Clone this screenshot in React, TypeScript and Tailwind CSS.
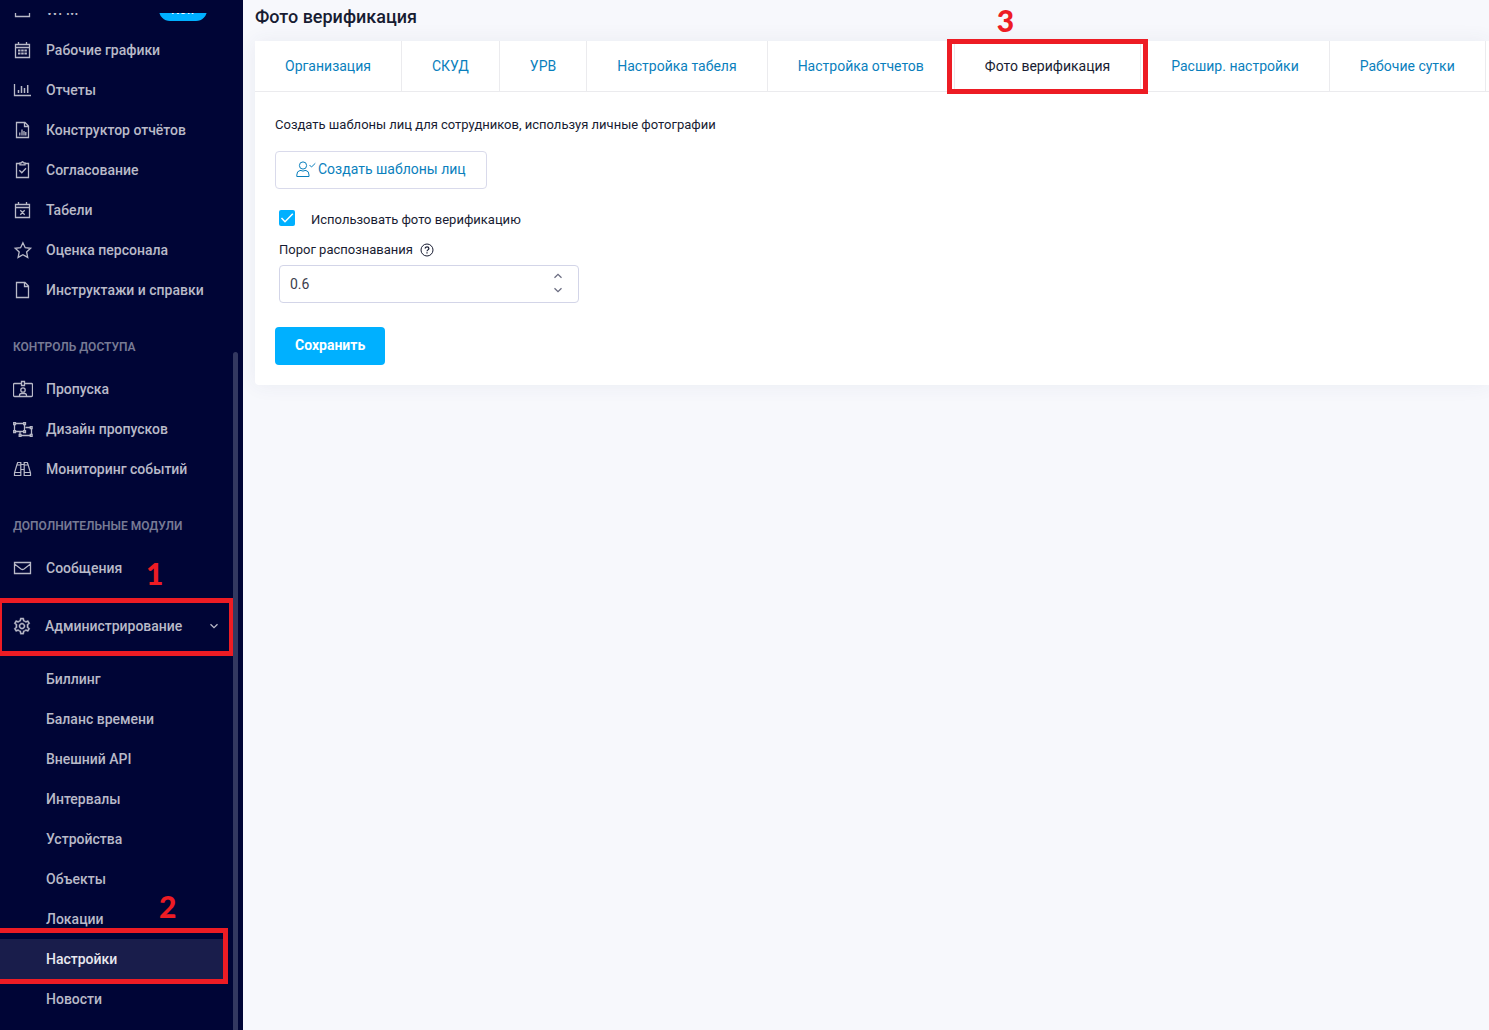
import type { ReactNode } from "react";
import { clsx } from "clsx";
import { LiaCogSolid } from "react-icons/lia";

interface NavItem {
  label: string;
  icon: ReactNode;
}

function LineIcon({ children }: { children: ReactNode }) {
  return (
    <svg
      width="20"
      height="20"
      viewBox="0 0 20 20"
      fill="none"
      stroke="currentColor"
      strokeWidth="1.3"
      className="shrink-0"
      aria-hidden="true"
    >
      {children}
    </svg>
  );
}

const WorkforceIcon = () => (
  <LineIcon>
    <path d="M2.5 3.5h14v13h-14z" />
  </LineIcon>
);

const ScheduleIcon = () => (
  <LineIcon>
    <path d="M2.5 4.5h14v13h-14zM2.5 7.5h14M5.500 2v2.500M13.500 2v2.500" />
    <path d="M5 10.500h9M5 13.500h9" strokeWidth="2" strokeDasharray="2.500 .7" />
  </LineIcon>
);

const ChartIcon = () => (
  <LineIcon>
    <path d="M1.500 4v11.500h16.500" />
    <path d="M5.500 10v3M8.500 6v7M11.500 8v5M14.700 5v8" strokeWidth="1.500" />
  </LineIcon>
);

const ReportFileIcon = () => (
  <LineIcon>
    <path d="M3.500 2.500h8.500l3.500 3.500v11.500h-12zM11.500 2.500v4h4" />
    <path d="M6.800 12.500V15.500M9 9.500v6M11 11v4.500M12.800 12v3.500" />
  </LineIcon>
);

const ClipboardIcon = () => (
  <LineIcon>
    <path d="M7 3.500H3.500v14h12v-14H12M7 2.800h1.500c.3-1.400 1.700-1.400 2 0H12v2H7zM6.300 10.300l2.500 2.500L13 8.300" />
  </LineIcon>
);

const TimesheetIcon = () => (
  <LineIcon>
    <path d="M2.500 4.500h14v13h-14zM2.500 7.500h14M5.500 2v2.500M13.500 2v2.500M7.300 10.300l4.400 4.400M11.700 10.300l-4.400 4.400" />
  </LineIcon>
);

const StarIcon = () => (
  <LineIcon>
    <path d="M9.900 2.700l2.300 5 5.400.6-4 3.700 1.100 5.400-4.800-2.700-4.800 2.700 1.100-5.400-4-3.700 5.400-.6z" />
  </LineIcon>
);

const FileIcon = () => (
  <LineIcon>
    <path d="M3.500 2.500h8.500l3.500 3.500v11.500h-12zM11.500 2.500v4h4" />
  </LineIcon>
);

const BadgeIcon = () => (
  <LineIcon>
    <path d="M8 4.500H1.500q-1 0-1 1v11q0 1 1 1h17q1 0 1-1v-11q0-1-1-1H12M8.500 2.500h3v4h-3zM6.500 17.500v-1a2 2 0 0 1 2-2h3a2 2 0 0 1 2 2v1" />
    <circle cx="10" cy="11" r="2.200" />
  </LineIcon>
);

const DesignIcon = () => (
  <LineIcon>
    <path d="M1.500 5.500v6M2.500 4.500h8M2.500 12.500h8M11.500 5.500v6M12.500 8.500h5M18.500 9.500v6M8 16.500h9.500M7 13v2.500" />
    <path d="M.7 3.700h1.800v1.800H.7zM10.700 3.700h1.800v1.800h-1.800zM.7 11.700h1.800v1.800H.7zM10.700 11.700h1.800v1.800h-1.800zM17.300 7.700h1.800v1.800h-1.800zM17.300 15.500h1.800v1.800h-1.800zM6.200 15.500H8v1.800H6.200z" />
  </LineIcon>
);

const BinocularsIcon = () => (
  <LineIcon>
    <path d="M4.700 3.500h3.100v13H1.500v-2.700L4 5.500zM14.300 3.500h-3.100v13h6.300v-2.700L15 5.500zM1.500 13.500h6.300M11.200 13.500h6.300M7.800 5.500h3.400M7.800 10.500h3.400M4 6h3.800M11.200 6H15" strokeWidth="1.200" />
  </LineIcon>
);

const EnvelopeIcon = () => (
  <LineIcon>
    <path d="M1.500 4.500h16v11h-16zM1.500 6l6.500 5q1.500 1 3 0l6.500-5" />
  </LineIcon>
);

function UserCheckIcon() {
  return (
    <svg width="20" height="20" viewBox="0 0 20 20" fill="none" stroke="currentColor" aria-hidden="true">
      <circle cx="7" cy="6.500" r="3.600" />
      <path d="M4 11.500h1l2 .6 2-.6h1q3 .5 3 4.500v1.500H.8V16q0-4 3.200-4.500zM13.500 6l2 2L19.300 4.300" />
    </svg>
  );
}

function QuestionIcon() {
  return (
    <svg width="14" height="14" viewBox="0 0 14 14" fill="none" stroke="currentColor" aria-hidden="true">
      <circle cx="7" cy="7" r="6" />
      <path d="M5.200 5.600c0-2.300 3.700-2.300 3.700 0 0 1.200-1.900 1.400-1.900 2.700M7 9.300v1.300" strokeWidth="1.200" />
    </svg>
  );
}

function Chevron({ up = false, className }: { up?: boolean; className?: string }) {
  return (
    <svg
      width="10"
      height="6"
      viewBox="0 0 10 6"
      fill="none"
      stroke="currentColor"
      strokeWidth="1.3"
      className={className}
      aria-hidden="true"
    >
      <path d={up ? "M1.500 4.700L5 1.300l3.500 3.400" : "M1.500 1.300L5 4.700l3.500-3.400"} />
    </svg>
  );
}

const mainItems: NavItem[] = [
  { label: "Рабочие графики", icon: <ScheduleIcon /> },
  { label: "Отчеты", icon: <ChartIcon /> },
  { label: "Конструктор отчётов", icon: <ReportFileIcon /> },
  { label: "Согласование", icon: <ClipboardIcon /> },
  { label: "Табели", icon: <TimesheetIcon /> },
  { label: "Оценка персонала", icon: <StarIcon /> },
  { label: "Инструктажи и справки", icon: <FileIcon /> },
];

const accessItems: NavItem[] = [
  { label: "Пропуска", icon: <BadgeIcon /> },
  { label: "Дизайн пропусков", icon: <DesignIcon /> },
  { label: "Мониторинг событий", icon: <BinocularsIcon /> },
];

const adminItems = [
  "Биллинг",
  "Баланс времени",
  "Внешний API",
  "Интервалы",
  "Устройства",
  "Объекты",
  "Локации",
  "Настройки",
  "Новости",
];

const tabs = [
  "Организация",
  "СКУД",
  "УРВ",
  "Настройка табеля",
  "Настройка отчетов",
  "Фото верификация",
  "Расшир. настройки",
  "Рабочие сутки",
];

function Mark({ children, className }: { children: ReactNode; className: string }) {
  return (
    <span className={clsx("absolute font-['Lato',sans-serif] text-[30px] leading-9 font-black text-[#ed1c24]", className)}>
      {children}
    </span>
  );
}

function NavLink({ label, icon }: NavItem) {
  return (
    <a href="#" className="flex h-10 items-center gap-[13px] pl-[13px]">
      {icon}
      {label}
    </a>
  );
}

function SectionTitle({ children }: { children: ReactNode }) {
  return <h2 className="flex h-[59px] items-center pt-[15px] pl-[13px] text-xs font-semibold text-[#777a94]">{children}</h2>;
}

function Sidebar() {
  return (
    <aside className="relative w-[243px] shrink-0 bg-[#000536] pt-[13px] font-medium text-[#b9bac8]">
      <nav className="h-full overflow-hidden">
        <a href="#" className="-mt-[23px] flex h-10 items-center gap-[13px] pl-[13px]">
          <WorkforceIcon />
          WFM
          <span className="mr-9 ml-auto flex h-[22px] w-12 items-center justify-center rounded-full bg-[#00b0ff] text-xs text-white">
            New
          </span>
        </a>
        {mainItems.map((item) => (
          <NavLink key={item.label} {...item} />
        ))}
        <SectionTitle>КОНТРОЛЬ ДОСТУПА</SectionTitle>
        {accessItems.map((item) => (
          <NavLink key={item.label} {...item} />
        ))}
        <SectionTitle>ДОПОЛНИТЕЛЬНЫЕ МОДУЛИ</SectionTitle>
        <div className="relative">
          <NavLink label="Сообщения" icon={<EnvelopeIcon />} />
          <Mark className="top-[7px] left-[146px]">1</Mark>
        </div>
        <button
          type="button"
          aria-expanded="true"
          className="relative mt-[10px] mb-[3px] flex h-[58px] w-full items-center gap-[13px] pb-0.5 pl-3 text-left"
        >
          <LiaCogSolid size={20} stroke="currentColor" strokeWidth="0.6" />
          Администрирование
          <Chevron className="mr-6 ml-auto" />
          <span className="absolute inset-y-0 -left-[3px] w-[237px] border-[5px] border-[#ed1c24]" />
        </button>
        <ul>
          {adminItems.map((label) => {
            const active = label === "Настройки";
            return (
              <li key={label} className="relative">
                <a
                  href="#"
                  className={clsx("flex h-10 items-center pl-[46px]", active && "mr-5 bg-[#191d4b] text-[#e8e8ef]")}
                >
                  {label}
                </a>
                {active && (
                  <>
                    <span className="absolute -top-[11px] -left-[5px] h-14 w-[233px] border-[5px] border-[#ed1c24]" />
                    <Mark className="-top-[51px] left-[159px]">2</Mark>
                  </>
                )}
              </li>
            );
          })}
        </ul>
      </nav>
      <div className="absolute top-[352px] right-[5px] bottom-0 w-[5px] rounded-t-full bg-[#333860]" />
    </aside>
  );
}

function Tabs() {
  return (
    <div role="tablist" className="flex h-[51px] border-b border-[#ebebee]">
      {tabs.map((tab) => {
        const active = tab === "Фото верификация";
        return (
          <button
            key={tab}
            type="button"
            role="tab"
            aria-selected={active}
            className={clsx(
              "relative shrink-0 border-r border-[#ebebee] px-[30px] whitespace-nowrap",
              active ? "text-[#181c32]" : "text-[#0a7fbd]",
            )}
          >
            {tab}
            {active && (
              <>
                <span className="absolute -inset-x-2 -top-[2px] h-[55px] border-[5px] border-[#ed1c24]" />
                <Mark className="-top-[39px] left-[42px]">3</Mark>
              </>
            )}
          </button>
        );
      })}
    </div>
  );
}

function SettingsForm() {
  return (
    <form className="flex flex-col items-start p-5 pt-6 text-[13px]">
      <p className="leading-[18px]">Создать шаблоны лиц для сотрудников, используя личные фотографии</p>
      <button
        type="button"
        className="mt-[17px] flex h-[38px] items-center gap-0.5 rounded border border-[#d9daeb] px-5 pb-0.5 text-sm text-[#0a7fbd]"
      >
        <UserCheckIcon />
        Создать шаблоны лиц
      </button>
      <label className="mt-[21px] ml-1 flex h-[19px] items-start gap-4 leading-[19px]">
        <span className="relative flex size-4">
          <input type="checkbox" defaultChecked className="size-4 appearance-none rounded-xs checked:bg-[#00b0ff]" />
          <svg viewBox="0 0 16 16" className="pointer-events-none absolute inset-0" fill="none" stroke="white" strokeWidth="1.5">
            <path d="M2.500 8l3.500 3.700L13.800 3.700" />
          </svg>
        </span>
        Использовать фото верификацию
      </label>
      <div className="mt-[11px] ml-1 flex h-5 items-center gap-[7px]">
        <label htmlFor="threshold">Порог распознавания</label>
        <QuestionIcon />
      </div>
      <div className="relative mt-[5px] ml-1 w-[300px]">
        <input
          id="threshold"
          type="text"
          inputMode="decimal"
          defaultValue="0.6"
          className="h-[38px] w-full rounded border border-[#d3d5e8] px-[10px] text-sm text-[#3b3d4d] outline-none"
        />
        <div className="absolute inset-y-0 right-4 flex flex-col items-center justify-center gap-2 pb-0.5 text-[#6a6c80]">
          <button type="button" aria-label="Увеличить">
            <Chevron up className="block" />
          </button>
          <button type="button" aria-label="Уменьшить">
            <Chevron className="block" />
          </button>
        </div>
      </div>
      <button type="submit" className="mt-6 h-[38px] rounded bg-[#00b0ff] px-5 pb-0.5 text-sm font-bold text-white">
        Сохранить
      </button>
    </form>
  );
}

export default function App() {
  return (
    <div className="flex h-screen overflow-hidden bg-[#f7f8fc] font-['Roboto',sans-serif] text-sm text-[#181c32]">
      <Sidebar />
      <main className="min-w-0 flex-1 pt-[5px] pl-3">
        <h1 className="text-lg leading-6 font-medium">Фото верификация</h1>
        <section className="mt-3 rounded-bl bg-white shadow-[0_0_20px_rgba(56,71,109,0.07)]">
          <Tabs />
          <SettingsForm />
        </section>
      </main>
    </div>
  );
}
